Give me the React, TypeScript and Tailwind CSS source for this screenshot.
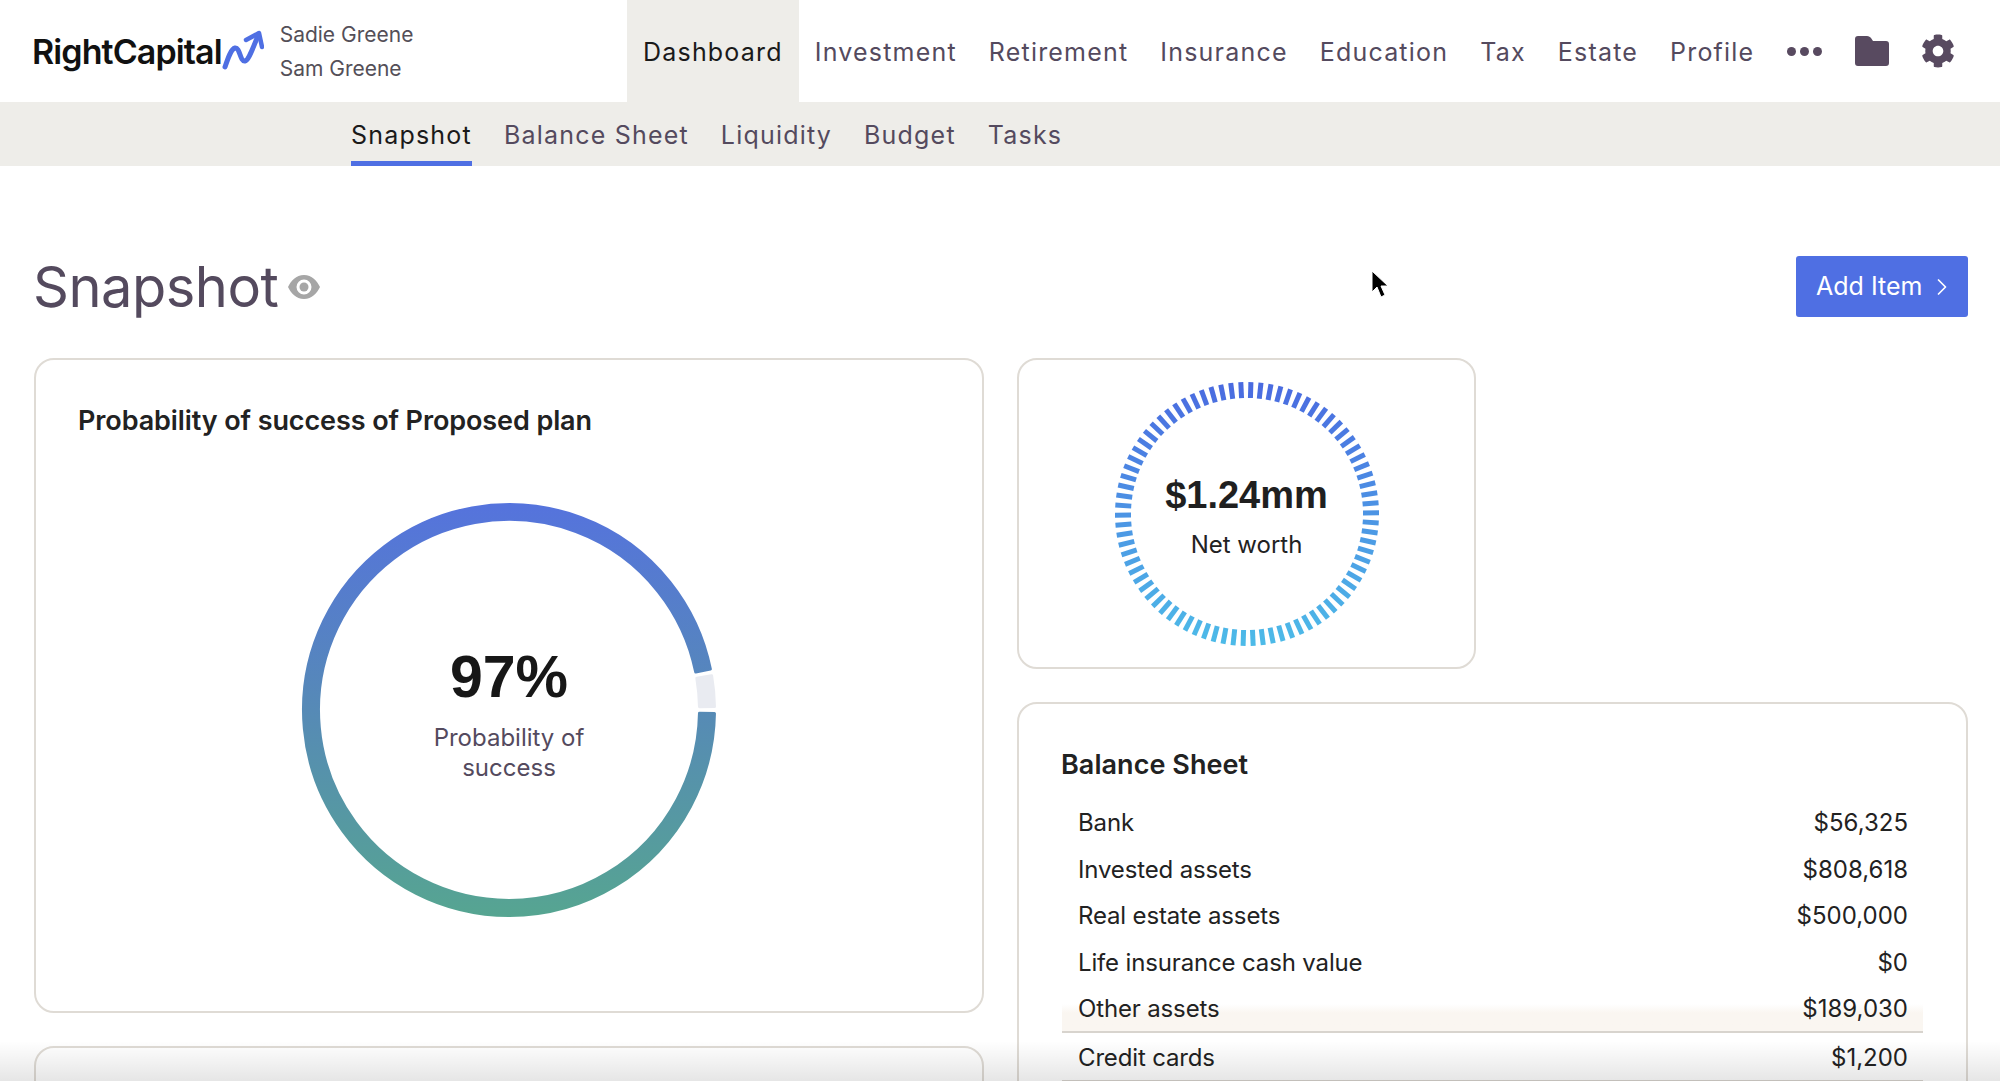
import React from "react";
import { FaCog } from "react-icons/fa";
import { ChevronRight } from "lucide-react";

const mainNav = ["Investment", "Retirement", "Insurance", "Education", "Tax", "Estate", "Profile"];
const subNav = ["Balance Sheet", "Liquidity", "Budget", "Tasks"];
const rows = [
  ["Bank", "$56,325"],
  ["Invested assets", "$808,618"],
  ["Real estate assets", "$500,000"],
  ["Life insurance cash value", "$0"],
  ["Other assets", "$189,030"],
];

const Logo = () => (
  <div className="flex items-center">
    <span className="text-[34px] font-semibold tracking-[-0.9px] text-[#111]">RightCapital</span>
    <svg width="42" height="42" viewBox="0 0 42 42" fill="none">
      <path
        d="M3 37 C6 28 9 19 13 18 C18 17 18 32 23 31 C27 30 31 17 36 6"
        stroke="#4f6fe3"
        strokeWidth="5"
        strokeLinecap="round"
      />
      <path d="M24 10 L37 3 L40 17" stroke="#4f6fe3" strokeWidth="4.5" strokeLinecap="round" strokeLinejoin="round" />
    </svg>
  </div>
);

const sector = (r0: number, r1: number, a0: number, a1: number) => {
  const pt = (r: number, a: number) => {
    const t = (a * Math.PI) / 180;
    return `${(210 + r * Math.cos(t)).toFixed(2)} ${(210 + r * Math.sin(t)).toFixed(2)}`;
  };
  const large = Math.abs(a1 - a0) > 180 ? 1 : 0;
  return `M${pt(r1, a0)} A${r1} ${r1} 0 ${large} 1 ${pt(r1, a1)} L${pt(r0, a1)} A${r0} ${r0} 0 ${large} 0 ${pt(r0, a0)} Z`;
};

const SuccessRing = () => (
  <div className="relative w-[420px] h-[420px]">
    <svg width="420" height="420" viewBox="0 0 420 420">
      <defs>
        <linearGradient id="ring" gradientUnits="userSpaceOnUse" x1="0" y1="3" x2="0" y2="417">
          <stop offset="0" stopColor="#5573dd" />
          <stop offset="0.5" stopColor="#568ab6" />
          <stop offset="1" stopColor="#56a591" />
        </linearGradient>
      </defs>
      <path
        d={sector(190.5, 205.5, 1, 348.5)}
        fill="url(#ring)"
        stroke="url(#ring)"
        strokeWidth="3"
        strokeLinejoin="round"
      />
      <path
        d={sector(190.5, 205.5, 350.4, 359)}
        fill="#e9ebf1"
        stroke="#e9ebf1"
        strokeWidth="3"
        strokeLinejoin="round"
      />
    </svg>
    <div className="absolute inset-0 flex flex-col items-center pt-[144px]">
      <div className="font-['Liberation_Sans'] text-[59px] leading-[66px] font-bold text-[#171717]">97%</div>
      <div className="mt-[13px] w-[180px] text-center text-[24px] leading-[30px] text-[#544a5e]">
        Probability of success
      </div>
    </div>
  </div>
);

const ticks = Array.from({ length: 82 }, (_, i) => (i * 360) / 82 - 0.5);

const NetWorthRing = () => (
  <div className="relative w-[268px] h-[268px]">
    <svg width="268" height="268" viewBox="0 0 268 268">
      <defs>
        <linearGradient id="ticks" gradientUnits="userSpaceOnUse" x1="0" y1="2" x2="0" y2="266">
          <stop offset="0" stopColor="#4a6ae0" />
          <stop offset="0.5" stopColor="#4c94e4" />
          <stop offset="1" stopColor="#4dbbe8" />
        </linearGradient>
      </defs>
      {ticks.map((a) => {
        const t = (a * Math.PI) / 180;
        return (
          <line
            key={a}
            x1={134 + 116 * Math.cos(t)}
            y1={134 + 116 * Math.sin(t)}
            x2={134 + 132 * Math.cos(t)}
            y2={134 + 132 * Math.sin(t)}
            stroke="url(#ticks)"
            strokeWidth="5"
          />
        );
      })}
    </svg>
    <div className="absolute inset-0 flex flex-col items-center pt-[93px]">
      <div className="font-['Liberation_Sans'] text-[38px] leading-[44px] font-bold text-[#1f1f1f]">$1.24mm</div>
      <div className="mt-[12px] text-[24px] leading-[32px] text-[#222]">Net worth</div>
    </div>
  </div>
);

export default function App() {
  return (
    <div className="relative h-[1081px] w-[2000px] overflow-hidden bg-white font-['Inter',sans-serif]">
      <header className="flex h-[102px] items-stretch bg-white">
        <div className="flex w-[627px] items-center pl-[32px]">
          <Logo />
          <div className="ml-[16px] mt-[2px] flex flex-col gap-[10px] text-[21px] leading-[24px] text-[#544f58]">
            <span>Sadie Greene</span>
            <span>Sam Greene</span>
          </div>
        </div>
        <nav className="flex items-stretch text-[25px] tracking-[1.2px] text-[#544a5e]">
          <a className="flex items-center bg-[#eeede9] pl-[16px] pr-[16px] pt-[3px] text-[#1a1a1a]">Dashboard</a>
          {mainNav.map((item) => (
            <a key={item} className="flex items-center px-[16px] pt-[3px]">
              {item}
            </a>
          ))}
        </nav>
        <div className="ml-[17px] flex items-center text-[#584a60]">
          <div className="flex gap-[4px]">
            <span className="h-[9px] w-[9px] rounded-full bg-[#584a60]" />
            <span className="h-[9px] w-[9px] rounded-full bg-[#584a60]" />
            <span className="h-[9px] w-[9px] rounded-full bg-[#584a60]" />
          </div>
          <svg width="34" height="30" viewBox="0 0 34 30" className="ml-[33px]">
            <path
              d="M3 0 H12 C14 0 15 1 16 2 L18 5 H31 C33 5 34 6 34 8 V27 C34 29 33 30 31 30 H3 C1 30 0 29 0 27 V3 C0 1 1 0 3 0 Z"
              fill="#584a60"
            />
          </svg>
          <FaCog className="ml-[32px] h-[34px] w-[34px]" />
        </div>
      </header>

      <div className="flex h-[64px] items-stretch gap-[32px] bg-[#eeede9] pl-[351px] text-[25px] tracking-[1.2px] text-[#544a5e]">
        <a className="flex items-center border-b-[5px] border-[#4f6fe3] pt-[9px] text-[#1a1a1a]">Snapshot</a>
        {subNav.map((item) => (
          <a key={item} className="flex items-center pt-[4px]">
            {item}
          </a>
        ))}
      </div>

      <main className="pl-[34px] pr-[32px]">
        <div className="mt-[90px] flex h-[61px] items-center justify-between">
          <div className="flex items-center gap-[10px]">
            <h1 className="-ml-[1px] text-[56px] leading-[64px] tracking-[-0.5px] text-[#544a5e]">Snapshot</h1>
            <svg width="32" height="26" viewBox="0 0 32 26">
              <path
                fillRule="evenodd"
                d="M16 1 C24 1 29 7 32 13 C29 19 24 25 16 25 C8 25 3 19 0 13 C3 7 8 1 16 1 Z M16 5.5 A7.5 7.5 0 1 0 16 20.5 A7.5 7.5 0 1 0 16 5.5 Z"
                fill="#a6a6a6"
              />
              <circle cx="16" cy="13" r="4.5" fill="#a6a6a6" />
            </svg>
          </div>
          <button className="flex h-[61px] w-[172px] items-center rounded-[3px] bg-[#4f6fe3] pl-[20px] text-[25px] text-white">
            Add Item
            <ChevronRight className="ml-[6px] h-[28px] w-[28px]" strokeWidth={1.5} />
          </button>
        </div>

        <div className="mt-[41px] grid grid-cols-[950px_951px] gap-x-[33px]">
          <div className="flex flex-col gap-[33px]">
            <section className="h-[655px] rounded-[20px] border-2 border-[#dfdbd5] px-[42px] pt-[44px]">
              <h2 className="text-[27px] leading-[34px] font-semibold tracking-[-0.1px] text-[#222]">
                Probability of success of Proposed plan
              </h2>
              <div className="mt-[62px] flex justify-center">
                <SuccessRing />
              </div>
            </section>
            <section className="h-[200px] rounded-[20px] border-2 border-[#dfdbd5]" />
          </div>

          <div className="flex flex-col gap-[33px]">
            <section className="flex h-[311px] w-[459px] items-center justify-center rounded-[20px] border-2 border-[#dfdbd5]">
              <NetWorthRing />
            </section>
            <section className="h-[600px] rounded-[20px] border-2 border-[#dfdbd5] px-[43px] pt-[44px]">
              <h2 className="-ml-[1px] text-[27px] leading-[34px] font-semibold tracking-[0.05px] text-[#222]">
                Balance Sheet
              </h2>
              <div className="mt-[18px] text-[24px] text-[#222]">
                {rows.map(([label, value], i) => (
                  <div
                    key={label}
                    className={
                      i === 4
                        ? "flex h-[47px] items-center justify-between border-b-2 border-[#d8d4ce] bg-gradient-to-b from-white from-40% to-[#faf6f1] to-60% pl-[16px] pr-[15px]"
                        : "flex h-[46.5px] items-center justify-between pl-[16px] pr-[15px]"
                    }
                  >
                    <span className="tracking-[-0.15px]">{label}</span>
                    <span>{value}</span>
                  </div>
                ))}
                <div className="flex h-[49px] items-center justify-between border-b-2 border-[#d8d4ce] pl-[16px] pr-[15px] pt-[3px]">
                  <span className="tracking-[-0.15px]">Credit cards</span>
                  <span>$1,200</span>
                </div>
              </div>
            </section>
          </div>
        </div>
      </main>

      <div className="pointer-events-none absolute inset-x-0 bottom-0 h-[40px] bg-gradient-to-b from-transparent to-black/10" />
      <svg width="20" height="30" viewBox="0 0 20 30" className="absolute left-[1370px] top-[270px]">
        <path d="M2 1 L2 22 L7 17 L11 27 L15 25 L11 16 L18 16 Z" fill="#000" stroke="#fff" strokeWidth="1" />
      </svg>
    </div>
  );
}
